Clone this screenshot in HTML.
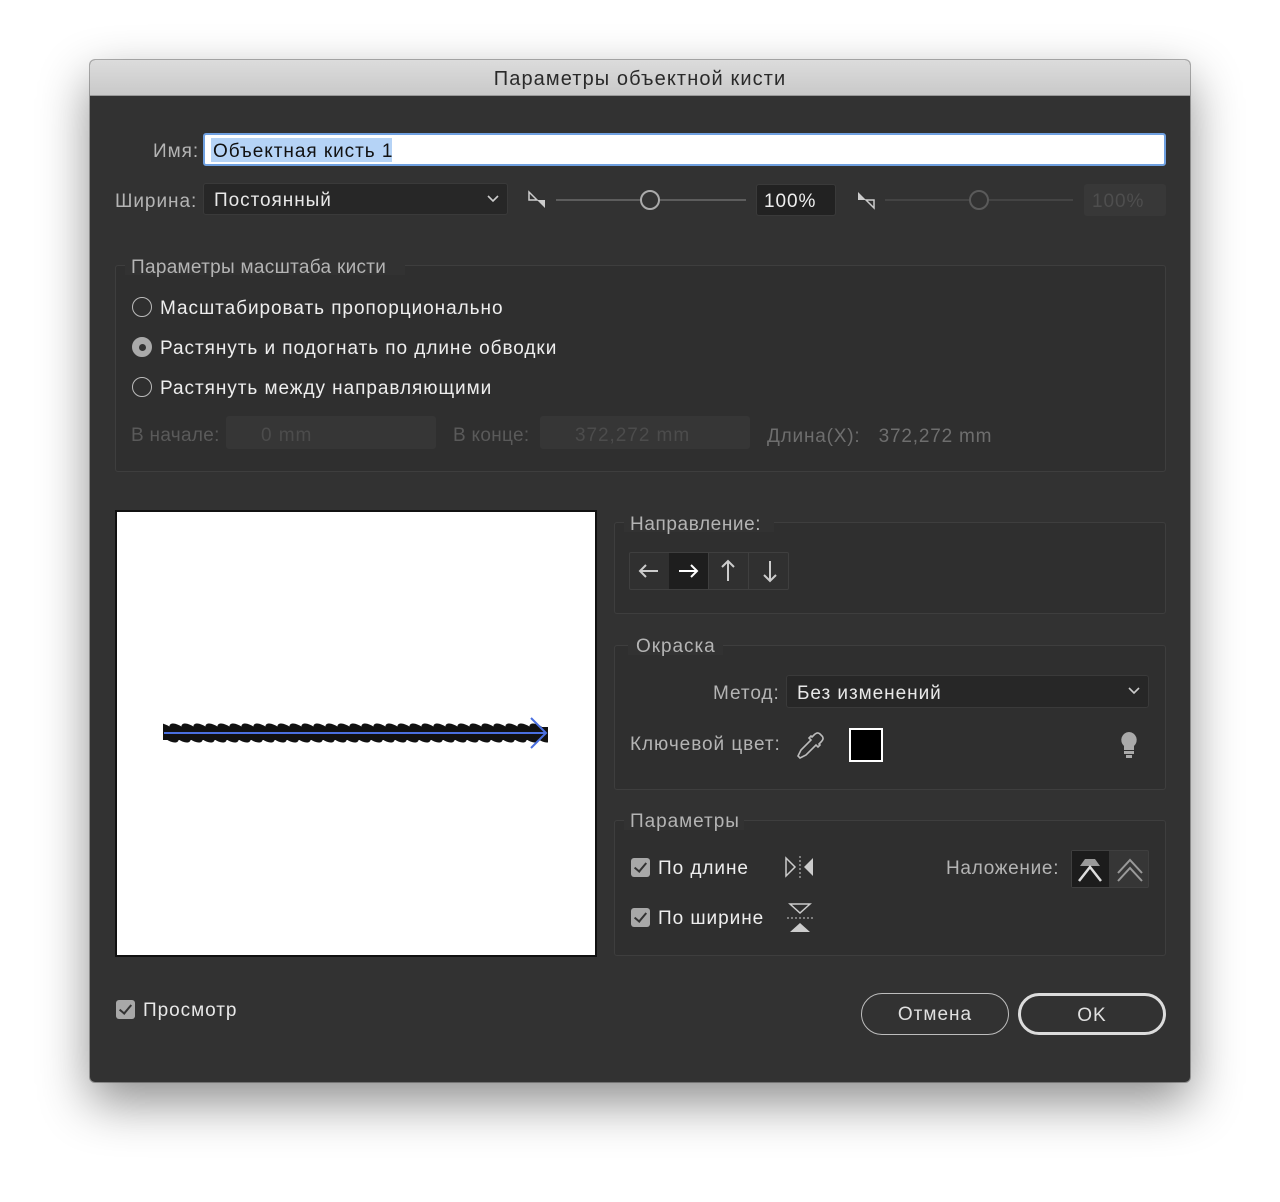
<!DOCTYPE html>
<html><head><meta charset="utf-8"><style>
*{box-sizing:border-box;margin:0;padding:0}
body{width:1280px;height:1202px;background:#fff;font-family:"Liberation Sans","DejaVu Sans",sans-serif;position:relative;overflow:hidden}
.dlg{position:absolute;left:90px;top:60px;width:1100px;height:1022px;background:#323232;border-radius:5px;box-shadow:0 20px 50px rgba(0,0,0,.45),0 0 0 1px rgba(0,0,0,.3);overflow:hidden}
.title{position:absolute;left:0;top:0;width:1100px;height:36px;background:linear-gradient(#dcdcdc,#c9c9c9);border-bottom:1px solid #999;text-align:center;font-size:20px;letter-spacing:1.1px;line-height:39px;color:#2a2a2a}
.a{position:absolute;white-space:nowrap}
.t,.l,.d{font-size:19px;letter-spacing:0.95px}
.t{color:#d8d8d8}
.l{color:#b4b4b4}
.d{color:#5a5a5a}
.box{position:absolute;border:1px solid #3e3e3e;background:#2f2f2f;border-radius:3px}
.inp{position:absolute;background:#222;border:1px solid #3a3a3a;border-radius:3px}
.radio{position:absolute;width:20px;height:20px;border:1.5px solid #bbb;border-radius:50%}
.cb{position:absolute;width:19px;height:19px;background:#a8a8a8;border-radius:3px}
.cb:after{content:"";position:absolute;left:6px;top:2px;width:5px;height:10px;border:solid #333;border-width:0 2px 2px 0;transform:rotate(40deg)}
.btn{position:absolute;border-radius:22px;color:#e0e0e0;font-size:19px;letter-spacing:1px;text-align:center}
</style></head><body>
<div class="dlg">
<div class="title">Параметры объектной кисти</div>
</div>
<!-- name -->
<div class="a l" style="left:153px;top:141px">Имя:</div>
<div class="a" style="left:203px;top:133px;width:963px;height:33px;background:#fff;border:2px solid #6fa0e0;border-radius:3px"></div>
<div class="a" style="left:211px;top:138px;height:24px;width:181px;background:#b5d3f6"></div>
<div class="a" style="left:213px;top:141px;font-size:19px;letter-spacing:0.95px;color:#111">Объектная кисть 1</div>
<!-- width -->
<div class="a l" style="left:115px;top:191px">Ширина:</div>
<div class="inp" style="left:203px;top:183px;width:305px;height:32px;background:#272727"></div>
<div class="a t" style="left:214px;top:190px;color:#e8e8e8">Постоянный</div>
<svg class="a" style="left:485px;top:192px" width="16" height="14"><path d="M3 4l5 5 5-5" fill="none" stroke="#ccc" stroke-width="1.6"/></svg>
<svg class="a" style="left:527px;top:190px" width="22" height="22"><path d="M2 2v8h8z" fill="none" stroke="#ccc" stroke-width="1.5"/><path d="M10 10h8v8z" fill="#ccc"/></svg>
<div class="a" style="left:556px;top:199px;width:190px;height:2px;background:#5d5d5d"></div>
<div class="a" style="left:640px;top:190px;width:20px;height:20px;border:2.5px solid #aaa;border-radius:50%;background:#323232"></div>
<div class="inp" style="left:756px;top:184px;width:80px;height:32px"></div>
<div class="a t" style="left:764px;top:191px;color:#eee">100%</div>
<svg class="a" style="left:856px;top:190px" width="22" height="22"><path d="M2 2v8h8z" fill="#ccc"/><path d="M10 10h8v8z" fill="none" stroke="#ccc" stroke-width="1.5"/></svg>
<div class="a" style="left:885px;top:199px;width:188px;height:2px;background:#444"></div>
<div class="a" style="left:969px;top:190px;width:20px;height:20px;border:2.5px solid #5a5a5a;border-radius:50%;background:#323232"></div>
<div class="a" style="left:1084px;top:184px;width:82px;height:32px;background:#383838;border-radius:3px"></div>
<div class="a d" style="left:1092px;top:191px;color:#4e4e4e">100%</div>
<!-- scale group -->
<div class="box" style="left:115px;top:265px;width:1051px;height:207px"></div>
<div class="a" style="left:125px;top:255px;width:280px;height:20px;background:#323232"></div>
<div class="a l" style="left:131px;top:257px;letter-spacing:0.3px">Параметры масштаба кисти</div>
<div class="radio" style="left:132px;top:297px"></div>
<div class="a t" style="left:160px;top:298px;color:#eee">Масштабировать пропорционально</div>
<div class="radio" style="left:132px;top:337px;background:#aaa;border-color:#aaa"></div>
<div class="a" style="left:139px;top:344px;width:7px;height:7px;border-radius:50%;background:#333"></div>
<div class="a t" style="left:160px;top:338px;color:#eee">Растянуть и подогнать по длине обводки</div>
<div class="radio" style="left:132px;top:377px"></div>
<div class="a t" style="left:160px;top:378px;color:#eee">Растянуть между направляющими</div>
<div class="a d" style="left:131px;top:425px;letter-spacing:0.3px">В начале:</div>
<div class="a" style="left:226px;top:416px;width:210px;height:33px;background:#363636;border-radius:3px"></div>
<div class="a d" style="left:261px;top:425px;color:#4c4c4c">0 mm</div>
<div class="a d" style="left:453px;top:425px;letter-spacing:0.3px">В конце:</div>
<div class="a" style="left:540px;top:416px;width:210px;height:33px;background:#363636;border-radius:3px"></div>
<div class="a d" style="left:575px;top:425px;color:#4c4c4c">372,272 mm</div>
<div class="a" style="left:767px;top:426px;font-size:19px;letter-spacing:0.8px;color:#6e6e6e">Длина(X):&nbsp;&nbsp; 372,272 mm</div>
<!-- preview -->
<div class="a" style="left:115px;top:510px;width:482px;height:447px;background:#fff;border:2px solid #111"></div>
<svg class="a" style="left:160px;top:715px" width="395" height="40">
<defs><clipPath id="c"><rect x="3" y="7" width="385" height="23"/></clipPath>
<ellipse id="e" cx="0" cy="18" rx="6" ry="13" fill="#111" transform="rotate(-50 0 18)"/></defs>
<g clip-path="url(#c)">
<rect x="3" y="12" width="385" height="13" fill="#111"/>
<use href="#e" x="8"/><use href="#e" x="20"/><use href="#e" x="32"/><use href="#e" x="44"/><use href="#e" x="56"/><use href="#e" x="68"/><use href="#e" x="80"/><use href="#e" x="92"/><use href="#e" x="104"/><use href="#e" x="116"/><use href="#e" x="128"/><use href="#e" x="140"/><use href="#e" x="152"/><use href="#e" x="164"/><use href="#e" x="176"/><use href="#e" x="188"/><use href="#e" x="200"/><use href="#e" x="212"/><use href="#e" x="224"/><use href="#e" x="236"/><use href="#e" x="248"/><use href="#e" x="260"/><use href="#e" x="272"/><use href="#e" x="284"/><use href="#e" x="296"/><use href="#e" x="308"/><use href="#e" x="320"/><use href="#e" x="332"/><use href="#e" x="344"/><use href="#e" x="356"/><use href="#e" x="368"/><use href="#e" x="380"/>
</g>
<path d="M4 18H385" stroke="#4a6fe0" stroke-width="2"/>
<path d="M371 3L386 18L371 33" fill="none" stroke="#4a6fe0" stroke-width="2"/>
</svg>
<!-- direction -->
<div class="box" style="left:614px;top:522px;width:552px;height:92px"></div>
<div class="a" style="left:624px;top:512px;width:150px;height:20px;background:#323232"></div>
<div class="a l" style="left:630px;top:514px;letter-spacing:0.6px">Направление:</div>
<div class="a" style="left:629px;top:552px;width:160px;height:38px;border:1px solid #3f3f3f;background:#303030;border-radius:2px"></div>
<div class="a" style="left:669px;top:553px;width:39px;height:36px;background:#1e1e1e"></div>
<div class="a" style="left:708px;top:553px;width:1px;height:36px;background:#3f3f3f"></div>
<div class="a" style="left:748px;top:553px;width:1px;height:36px;background:#3f3f3f"></div>
<svg class="a" style="left:629px;top:552px" width="160" height="38"><g stroke="#ccc" stroke-width="2" fill="none"><path d="M29 19H11M17 13l-6 6 6 6"/><path d="M50 19h18M62 13l6 6-6 6" stroke="#fff"/><path d="M99 29V9M93 15l6-6 6 6"/><path d="M141 9v20M135 23l6 6 6-6"/></g></svg>
<!-- coloring -->
<div class="box" style="left:614px;top:645px;width:552px;height:145px"></div>
<div class="a" style="left:628px;top:635px;width:95px;height:20px;background:#323232"></div>
<div class="a l" style="left:636px;top:636px">Окраска</div>
<div class="a l" style="left:713px;top:683px">Метод:</div>
<div class="inp" style="left:786px;top:675px;width:363px;height:33px;background:#272727"></div>
<div class="a t" style="left:797px;top:683px;color:#e8e8e8">Без изменений</div>
<svg class="a" style="left:1126px;top:684px" width="16" height="14"><path d="M3 4l5 5 5-5" fill="none" stroke="#ccc" stroke-width="1.6"/></svg>
<div class="a l" style="left:630px;top:734px">Ключевой цвет:</div>
<svg class="a" style="left:794px;top:730px" width="30" height="32"><path d="M26 4c-2-2-4-1-6 1l-2 2-1-1-2 2 2 2-10 10-3 6 2 2 6-3 10-10 2 2 2-2-1-1 2-2c2-2 3-4 1-6z" fill="none" stroke="#bbb" stroke-width="1.6"/></svg>
<div class="a" style="left:849px;top:728px;width:34px;height:34px;background:#000;border:2px solid #fff"></div>
<svg class="a" style="left:1118px;top:731px" width="22" height="28"><path d="M11 1a8 8 0 0 0-5 14v4h10v-4a8 8 0 0 0-5-14z" fill="#aaa"/><rect x="6" y="20" width="10" height="3" fill="#aaa"/><rect x="8" y="24" width="6" height="3" fill="#aaa"/></svg>
<!-- params -->
<div class="box" style="left:614px;top:820px;width:552px;height:136px"></div>
<div class="a" style="left:624px;top:810px;width:120px;height:20px;background:#323232"></div>
<div class="a l" style="left:630px;top:811px">Параметры</div>
<div class="cb" style="left:631px;top:858px"></div>
<div class="a t" style="left:658px;top:858px;color:#eee">По длине</div>
<svg class="a" style="left:784px;top:855px" width="32" height="26"><path d="M2 3v18l9-9z" fill="none" stroke="#ccc" stroke-width="1.5"/><path d="M16 1v24" stroke="#ccc" stroke-dasharray="2 2"/><path d="M29 3v18l-9-9z" fill="#ccc"/></svg>
<div class="cb" style="left:631px;top:908px"></div>
<div class="a t" style="left:658px;top:908px;color:#eee">По ширине</div>
<svg class="a" style="left:786px;top:902px" width="28" height="32"><path d="M4 2h20l-10 9z" fill="none" stroke="#ccc" stroke-width="1.5"/><path d="M1 16h26" stroke="#ccc" stroke-dasharray="2 2"/><path d="M4 30h20l-10-9z" fill="#ccc"/></svg>
<div class="a l" style="left:946px;top:858px;letter-spacing:0.7px">Наложение:</div>
<div class="a" style="left:1071px;top:850px;width:78px;height:38px;border:1px solid #3f3f3f;background:#363636;border-radius:2px"></div>
<div class="a" style="left:1072px;top:851px;width:37px;height:36px;background:#1c1c1c"></div>
<svg class="a" style="left:1076px;top:853px" width="70" height="32"><path d="M4 13l5-7h10l5 7z" fill="#999"/><path d="M3 28L14 14 25 28" fill="none" stroke="#ddd" stroke-width="2.5"/><path d="M42 28l12-13 12 13M42 20l12-13 12 13" fill="none" stroke="#999" stroke-width="2"/></svg>
<!-- bottom -->
<div class="cb" style="left:116px;top:1000px"></div>
<div class="a t" style="left:143px;top:1000px;color:#e8e8e8">Просмотр</div>
<div class="btn" style="left:861px;top:993px;width:148px;height:42px;border:1.5px solid #bdbdbd;line-height:42px">Отмена</div>
<div class="btn" style="left:1018px;top:993px;width:148px;height:42px;border:3px solid #dcdcdc;line-height:39px">OK</div>
</body></html>
